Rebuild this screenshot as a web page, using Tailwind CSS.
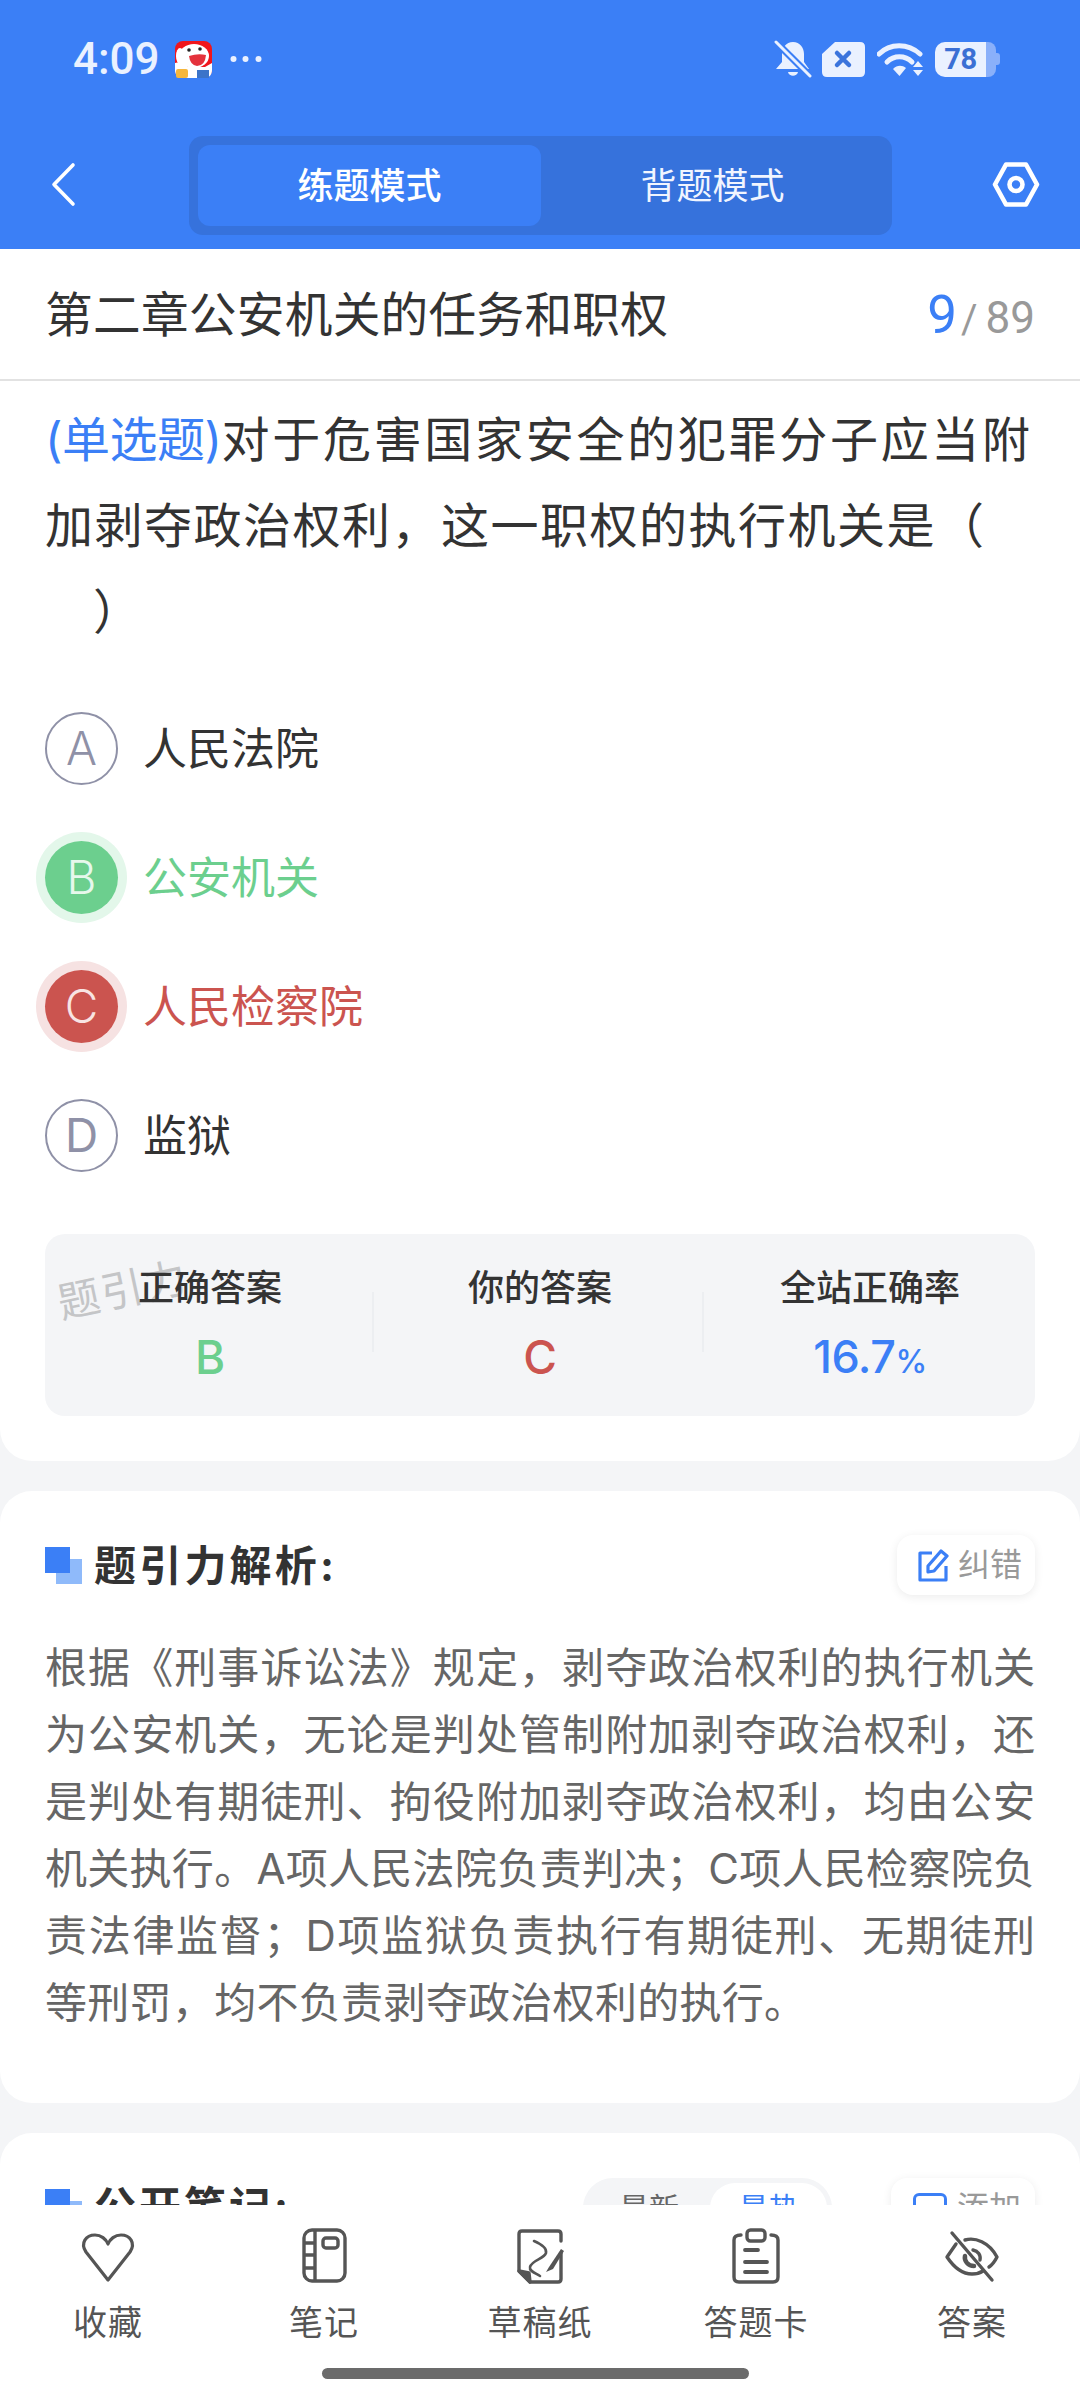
<!DOCTYPE html>
<html lang="zh-CN">
<head>
    <meta charset="UTF-8">
    <meta name="viewport" content="width=device-width, initial-scale=1.0">
    <title>练题模式</title>
    <script src="https://cdn.jsdelivr.net/npm/@tailwindcss/browser@4"></script>
</head>
<body class="w-[1080px] h-[2400px] overflow-hidden bg-[#f4f5f7] font-['Inter','Noto_Sans_CJK_SC',sans-serif] text-[#333]">
<div class="flex flex-col h-[2400px]">

    <!-- Header -->
    <header class="h-[249px] shrink-0 bg-[#3b7ff6]">
        <!-- Status bar -->
        <div class="flex items-center h-[40px] translate-y-[39px] pl-[73px] pr-[80px]">
            <span class="text-[44px] leading-[40px] font-medium text-[#eaf1ff] w-[102px] font-['Roboto',sans-serif]">4:09</span>
            <svg class="w-[37px] h-[37px]" viewBox="0 0 37 37">
                <rect width="37" height="37" rx="8" fill="#f0161c"/>
                <path d="M0 22 C6 20 10 22 13 26 L30 26 L37 22 L37 29 C37 34 34 37 29 37 L8 37 C3 37 0 34 0 29 Z" fill="#fff"/>
                <ellipse cx="19" cy="15" rx="15" ry="12" fill="#fff"/>
                <ellipse cx="5" cy="15" rx="4" ry="8" fill="#fff"/>
                <path d="M14 15 Q23 12 31 14 Q30 25 22 25 Q15 24 14 15 Z" fill="#e4323c"/>
                <circle cx="14" cy="9" r="1.8" fill="#222"/><circle cx="25" cy="8" r="1.8" fill="#222"/>
                <rect x="1" y="28" width="12" height="9" rx="2" fill="#f6b73c"/>
                <rect x="22" y="29" width="12" height="8" fill="#3c74c9"/>
            </svg>
            <svg class="w-[34px] h-[8px] ml-[18px]" viewBox="0 0 34 8" fill="#eaf1ff">
                <circle cx="3.5" cy="4" r="3"/><circle cx="15.5" cy="4" r="3"/><circle cx="28.5" cy="4" r="3"/>
            </svg>
            <div class="flex-1"></div>
            <!-- bell muted -->
            <svg class="w-[38px] h-[38px]" viewBox="0 0 38 38">
                <path d="M19 2 C26 2 30 8 30 14 L30 22 L35 29 L2 29 L8 22 L8 14 C8 8 12 2 19 2 Z M14 32 L24 32 C23 37 15 37 14 32 Z" fill="#eaf1ff"/>
                <path d="M2 2 L36 36" stroke="#3b7ff6" stroke-width="7"/>
                <path d="M2 2 L36 36" stroke="#eaf1ff" stroke-width="3" stroke-linecap="round"/>
            </svg>
            <!-- sim -->
            <svg class="w-[43px] h-[35px] ml-[10px]" viewBox="0 0 43 35">
                <path d="M13 0 L38 0 Q43 0 43 5 L43 30 Q43 35 38 35 L5 35 Q0 35 0 30 L0 12 Z" fill="#eaf1ff"/>
                <path d="M15 11 L27 23 M27 11 L15 23" stroke="#3b74dc" stroke-width="4.5" stroke-linecap="round"/>
            </svg>
            <!-- wifi -->
            <svg class="w-[47px] h-[35px] ml-[12px]" viewBox="0 0 47 35" fill="none">
                <path d="M2 12 C13 1 31 1 43 12" stroke="#eaf1ff" stroke-width="5" stroke-linecap="round"/>
                <path d="M10 20 C17 13 28 13 35 20" stroke="#eaf1ff" stroke-width="5" stroke-linecap="round"/>
                <path d="M16 27 C20 23 25 23 29 26 L22.5 34 Z" fill="#eaf1ff"/>
                <path d="M41 19 L46 25 L36 25 Z M36 28 L46 28 L41 34 Z" fill="#eaf1ff"/>
            </svg>
            <!-- battery -->
            <div class="relative flex items-center ml-[11px] h-[35px] w-[65px]">
                <div class="h-[35px] w-[51px] rounded-l-[10px] bg-[#eaf1ff] flex items-center justify-center text-[29px] font-bold leading-none tracking-[-0.5px] text-[#3b6fd4] font-['Roboto',sans-serif]">78</div>
                <div class="h-[35px] w-[10px] rounded-r-[8px] bg-[#8ab0fa]"></div>
                <div class="h-[12px] w-[4px] rounded-r-[3px] bg-[#8ab0fa]"></div>
            </div>
        </div>

        <!-- Nav -->
        <div class="relative flex items-center h-[99px] mt-[96px]">
            <svg class="absolute left-[50px] top-[26px] w-[26px] h-[45px]" viewBox="0 0 26 45" fill="none">
                <path d="M23 3 L4 22.5 L23 42" stroke="#fff" stroke-width="3.6" stroke-linecap="round" stroke-linejoin="round"/>
            </svg>
            <div class="flex ml-[189px] w-[703px] h-[99px] p-[9px] pr-0 rounded-[14px] bg-[#3672dc]">
                <div class="w-[343px] h-[81px] rounded-[12px] bg-[#3b7ff6] flex items-center justify-center text-[36px] font-medium text-white">练题模式</div>
                <div class="w-[343px] h-[81px] flex items-center justify-center text-[36px] text-[#f1f5ff]">背题模式</div>
            </div>
            <svg class="absolute left-[990px] top-[24px] w-[52px] h-[49px]" viewBox="0 0 52 49" fill="none">
                <path d="M16 4.5 L36 4.5 L47 24.5 L36 44.5 L16 44.5 L5 24.5 Z" stroke="#fff" stroke-width="4.6" stroke-linejoin="round"/>
                <circle cx="26" cy="24.5" r="6.5" stroke="#fff" stroke-width="4.6"/>
            </svg>
        </div>
    </header>

    <!-- Scrollable content -->
    <main class="flex-1 overflow-hidden">
        <!-- Question card -->
        <section class="bg-white rounded-b-[32px] pb-[45px]">
            <div class="flex items-center justify-between h-[132px] pt-[3px] px-[45px] border-b-2 border-[#e2e2e2]">
                <h1 class="text-[47.7px] leading-none font-normal tracking-[0.25px] text-[#333]">第二章公安机关的任务和职权</h1>
                <div class="flex items-baseline text-[#999] font-['Roboto',sans-serif]">
                    <span class="text-[53px] leading-none text-[#3b7ff6]">9</span>
                    <span class="text-[40px] leading-none ml-[4px]">/</span>
                    <span class="text-[44px] leading-none ml-[8px]">89</span>
                </div>
            </div>

            <p class="mt-[16px] px-[45px] text-[48px] leading-[86px] tracking-[2.7px] text-[#333] whitespace-nowrap"><span class="text-[#3b7ff6] tracking-[-0.5px]">(单选题)</span>对于危害国家安全的犯罪分子应当附<br><span class="tracking-[1.5px]">加剥夺政治权利，这一职权的执行机关是（</span><br><span class="ml-[48px]">）</span></p>

            <!-- Options -->
            <div class="mt-[29px] px-[45px]">
                <div class="flex items-center h-[129px]">
                    <div class="flex items-center justify-center w-[73px] h-[73px] rounded-full border-2 border-[#8f91a7] text-[46px] font-light text-[#8f91a7]">A</div>
                    <span class="ml-[25px] text-[44px] text-[#333]">人民法院</span>
                </div>
                <div class="flex items-center h-[129px]">
                    <div class="flex items-center justify-center w-[73px] h-[73px] rounded-full bg-[#6ccf8e] ring-[9px] ring-[#e3f7ea] text-[46px] font-light text-[#e6f8ec]">B</div>
                    <span class="ml-[25px] text-[44px] text-[#6ccf8e]">公安机关</span>
                </div>
                <div class="flex items-center h-[129px]">
                    <div class="flex items-center justify-center w-[73px] h-[73px] rounded-full bg-[#cb544f] ring-[9px] ring-[#f6e2e2] text-[46px] font-light text-[#f8e4e3]">C</div>
                    <span class="ml-[25px] text-[44px] text-[#cb544f]">人民检察院</span>
                </div>
                <div class="flex items-center h-[129px]">
                    <div class="flex items-center justify-center w-[73px] h-[73px] rounded-full border-2 border-[#8f91a7] text-[46px] text-[#8f91a7]">D</div>
                    <span class="ml-[25px] text-[44px] text-[#333]">监狱</span>
                </div>
            </div>

            <!-- Result stats -->
            <div class="relative grid grid-cols-3 mx-[45px] mt-[34px] h-[182px] rounded-[20px] bg-[#f4f5f7]">
                <span class="absolute left-[12px] top-[35px] text-[42px] leading-none tracking-[2px] text-[#c4c5c7] -rotate-[12deg] whitespace-nowrap">题引力</span>
                <div class="relative flex flex-col items-center pt-[30px]">
                    <span class="text-[36px] leading-[48px] font-medium text-[#333]">正确答案</span>
                    <span class="mt-[15px] text-[46px] leading-[60px] font-medium text-[#6ccf8e]">B</span>
                </div>
                <div class="relative flex flex-col items-center pt-[30px]">
                    <div class="absolute -left-[3px] top-[58px] h-[60px] w-[2px] bg-[#eceef1]"></div>
                    <span class="text-[36px] leading-[48px] font-medium text-[#333]">你的答案</span>
                    <span class="mt-[15px] text-[46px] leading-[60px] font-medium text-[#cb544f]">C</span>
                </div>
                <div class="relative flex flex-col items-center pt-[30px]">
                    <div class="absolute -left-[3px] top-[58px] h-[60px] w-[2px] bg-[#eceef1]"></div>
                    <span class="text-[36px] leading-[48px] font-medium text-[#333]">全站正确率</span>
                    <span class="mt-[15px] text-[45px] leading-[60px] font-medium tracking-[-0.5px] text-[#3b7ff6]">16.7<span class="text-[32px]">%</span></span>
                </div>
            </div>
        </section>

        <!-- Analysis card -->
        <section class="mt-[30px] bg-white rounded-[32px] pt-[44px] pb-[67px] px-[45px]">
            <div class="flex items-center justify-between h-[60px]">
                <div class="flex items-center">
                    <div class="relative w-[37px] h-[37px]">
                        <div class="absolute left-[11px] top-[12px] w-[26px] h-[25px] bg-[#8fbafa]"></div>
                        <div class="absolute left-0 top-0 w-[25px] h-[26px] bg-[#3b7ff6]"></div>
                    </div>
                    <h2 class="ml-[12px] translate-y-[1px] text-[42px] leading-none font-bold tracking-[3.2px] text-[#333]">题引力解析:</h2>
                </div>
                <div class="flex items-center w-[138px] h-[60px] pl-[20px] rounded-[16px] bg-white shadow-[0_2px_10px_rgba(0,0,0,0.08)]">
                    <svg class="w-[32px] h-[34px]" viewBox="0 0 32 34" fill="none">
                        <path d="M15 5 L3 5 L3 32 L29 32 L29 18" stroke="#3b7ff6" stroke-width="3.2" stroke-linejoin="round"/>
                        <path d="M11 18 L24 3 L30 8 L17 23 L11 24 Z" stroke="#3b7ff6" stroke-width="3.2" stroke-linejoin="round"/>
                    </svg>
                    <span class="ml-[9px] text-[32px] leading-none text-[#999]">纠错</span>
                </div>
            </div>
            <div class="mt-[39px] text-[42px] leading-[67px] text-[#666] text-justify [text-align-last:justify]">
                <p>根据《刑事诉讼法》规定，剥夺政治权利的执行机关</p>
                <p>为公安机关，无论是判处管制附加剥夺政治权利，还</p>
                <p>是判处有期徒刑、拘役附加剥夺政治权利，均由公安</p>
                <p>机关执行。A项人民法院负责判决；C项人民检察院负</p>
                <p>责法律监督；D项监狱负责执行有期徒刑、无期徒刑</p>
                <p class="[text-align-last:left] tracking-[0.3px]">等刑罚，均不负责剥夺政治权利的执行。</p>
            </div>
        </section>

        <!-- Public notes card, cut off by the tab bar -->
        <section class="mt-[30px] bg-white rounded-t-[32px] pt-[45px] px-[45px] h-[200px]">
            <div class="flex items-start justify-between h-[60px]">
                <div class="flex items-center mt-[8px]">
                    <div class="relative w-[37px] h-[37px]">
                        <div class="absolute left-[11px] top-[12px] w-[26px] h-[25px] bg-[#8fbafa]"></div>
                        <div class="absolute left-0 top-0 w-[25px] h-[26px] bg-[#3b7ff6]"></div>
                    </div>
                    <h2 class="ml-[12px] text-[42px] leading-none font-bold tracking-[3px] text-[#333]">公开笔记:</h2>
                </div>
                <div class="flex items-start">
                    <div class="flex w-[249px] h-[60px] p-[5px] rounded-full bg-[#f4f5f7]">
                        <div class="w-[122px] flex items-center justify-center text-[30px] text-[#666]">最新</div>
                        <div class="w-[117px] flex items-center justify-center rounded-full bg-white text-[30px] text-[#3b7ff6]">最热</div>
                    </div>
                    <div class="flex items-center w-[144px] h-[60px] ml-[59px] pl-[22px] rounded-[16px] bg-white shadow-[0_2px_10px_rgba(0,0,0,0.08)]">
                        <div class="w-[34px] h-[30px] rounded-[6px] border-[3px] border-[#3b7ff6]"></div>
                        <span class="ml-[10px] text-[32px] text-[#999]">添加</span>
                    </div>
                </div>
            </div>
        </section>
    </main>

    <!-- Bottom tab bar -->
    <nav class="relative shrink-0 h-[195px] bg-white">
        <div class="grid grid-cols-5 pt-[20px]">
            <div class="flex flex-col items-center">
                <svg class="w-[60px] h-[60px]" viewBox="0 0 60 60" fill="none" stroke="#555" stroke-width="3.2" stroke-linejoin="round">
                    <path d="M30 55 L8 27 C2 18 8 10 17 10 C23 10 28 14 30 19 C32 14 37 10 43 10 C52 10 58 18 52 27 Z"/>
                </svg>
                <span class="mt-[14px] text-[34px] leading-[48px] tracking-[1px] text-[#555]">收藏</span>
            </div>
            <div class="flex flex-col items-center">
                <svg class="w-[60px] h-[60px]" viewBox="0 0 60 60" fill="none" stroke="#555" stroke-width="3.4" stroke-linejoin="round">
                    <rect x="10" y="5" width="41" height="51" rx="8"/>
                    <path d="M21 5 L21 56 M10 18 L21 18 M10 30 L21 30 M10 43 L21 43"/>
                    <rect x="29" y="13" width="15" height="10" rx="3"/>
                </svg>
                <span class="mt-[14px] text-[34px] leading-[48px] tracking-[1px] text-[#555]">笔记</span>
            </div>
            <div class="flex flex-col items-center">
                <svg class="w-[60px] h-[60px]" viewBox="0 0 60 60" fill="none" stroke="#555" stroke-width="3.4" stroke-linejoin="round" stroke-linecap="round">
                    <path d="M51 16 L51 9 Q51 6 48 6 L12 6 Q9 6 9 9 L9 46 L20 57 L48 57 Q51 57 51 54 L51 28"/>
                    <path d="M9 46 L19 48 L20 57 Z" fill="#555"/>
                    <path d="M24 16 C31 19 37 23 36 28 C34 34 22 35 20 42 C19 46 25 48 30 51" stroke-width="2.6"/>
                    <path d="M39 42 L51 24 L54 26 L43 44 L36 47 Z" fill="#555" stroke="none"/>
                </svg>
                <span class="mt-[14px] text-[34px] leading-[48px] tracking-[1px] text-[#555]">草稿纸</span>
            </div>
            <div class="flex flex-col items-center">
                <svg class="w-[60px] h-[60px]" viewBox="0 0 60 60" fill="none" stroke="#555" stroke-width="3.4" stroke-linecap="round" stroke-linejoin="round">
                    <path d="M15 10 Q8 10 8 15 L8 52 Q8 57 13 57 L47 57 Q52 57 52 52 L52 15 Q52 10 45 10"/>
                    <rect x="21" y="5" width="18" height="11" rx="3.5"/>
                    <path d="M19 25 L32 25 M19 37 L41 37 M19 47 L41 47" stroke-width="3.8"/>
                </svg>
                <span class="mt-[14px] text-[34px] leading-[48px] tracking-[1px] text-[#555]">答题卡</span>
            </div>
            <div class="flex flex-col items-center">
                <svg class="w-[60px] h-[60px]" viewBox="0 0 60 60" fill="none" stroke="#555" stroke-width="3.4" stroke-linecap="round" stroke-linejoin="round">
                    <path d="M14 19 L5 32 C11 41 20 49 30 49 C34 49 38 48 41 46"/>
                    <path d="M23 15 C33 12 47 17 55 32 C53 36 50 40 47 42"/>
                    <path d="M31 25 C36 26 39 30 38 35"/>
                    <path d="M23 31 C22 36 26 41 32 41" stroke-width="4.5"/>
                    <path d="M10 8 L50 55"/>
                </svg>
                <span class="mt-[14px] text-[34px] leading-[48px] tracking-[1px] text-[#555]">答案</span>
            </div>
        </div>
        <div class="absolute left-[322px] top-[163px] w-[427px] h-[11px] rounded-full bg-[#6b6b6b]"></div>
    </nav>
</div>
</body>
</html>
